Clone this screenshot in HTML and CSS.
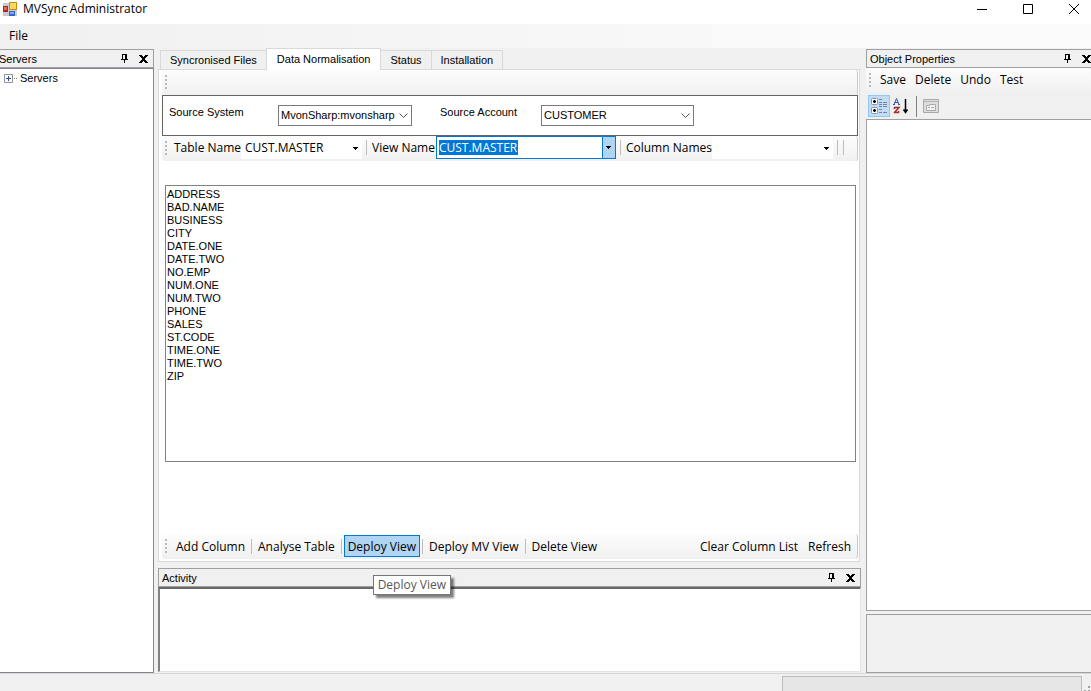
FILE: index.html
```html
<!DOCTYPE html>
<html lang="en">
<head>
  <meta charset="UTF-8" />
  <meta name="viewport" content="width=device-width, initial-scale=1.0"/>
  <title>MVSync Administrator</title>
  <link rel="stylesheet" href="styles.css">
</head>
<body>
  <svg width="0" height="0" class="defs">
    <symbol id="pin" viewBox="0 0 7 9"><path d="M1 0h5v5h1v1H4v3H3V6H0V5h1zM2 1v4h2V1z"/></symbol>
    <symbol id="cross" viewBox="0 0 9 8"><path d="M0 0h3v1h1v1h1V1h1V0h3v1H8v1H7v1H6v2h1v1h1v1h1v1H6V7H5V6H4v1H3v1H0V7h1V6h1V5h1V3H2V2H1V1H0z"/></symbol>
    <symbol id="arrow" viewBox="0 0 5 3"><path d="M0 0h5v1H4v1H3v1H2V2H1V1H0z"/></symbol>
    <symbol id="chevron" viewBox="0 0 9 6"><path d="M0.5 0.5L4.5 4.5L8.500 0.5" fill="none" stroke="#555"/></symbol>
  </svg>

  <header class="titlebar">
    <svg class="app-icon" width="14" height="14" viewBox="0 0 14 14">
      <path fill="#c8ccd2" d="M0 1h14v13H0z"/>
      <path fill="#b3261b" d="M0 4h5v6H0z"/><path fill="#e2694f" d="M1 5h3v3H1z"/>
      <path fill="#c98a12" d="M6 0h8v8H6z"/><path fill="#ffd65c" d="M7 1h6v6H7z"/>
      <path fill="#3665c4" d="M6 9h6v5H6z"/><path fill="#82aef5" d="M7 10h4v2H7z"/>
    </svg>
    <h1>MVSync Administrator</h1>
    <div class="window-buttons">
      <button aria-label="Minimize"><svg width="10" height="10"><path d="M0 5.500h10" stroke="#000"/></svg></button>
      <button aria-label="Maximize"><svg width="10" height="10"><path d="M.5.5h9v9h-9z" fill="none" stroke="#000"/></svg></button>
      <button aria-label="Close"><svg width="10" height="10"><path d="M0 0l10 10M10 0L0 10" stroke="#000"/></svg></button>
    </div>
  </header>

  <nav class="menubar"><button>File</button></nav>

  <div class="workspace">
    <aside class="servers">
      <div class="panel-head">
        <h2>Servers</h2>
        <button aria-label="Pin"><svg width="7" height="9"><use href="#pin"/></svg></button>
        <button aria-label="Close"><svg width="9" height="8"><use href="#cross"/></svg></button>
      </div>
      <ul class="tree">
        <li>
          <svg width="14" height="9" viewBox="0 0 14 9">
            <path d="M.5.5h8v8h-8z" fill="#fff" stroke="#919191"/>
            <path d="M2 4.500h5M4.500 2v5" stroke="#2b4a9b"/>
            <path d="M10 4.500h1M12 4.500h1" stroke="#808080"/>
          </svg>Servers
        </li>
      </ul>
    </aside>

    <main>
      <div class="tabs" role="tablist">
        <button role="tab">Syncronised Files</button>
        <button role="tab" class="active" aria-selected="true">Data Normalisation</button>
        <button role="tab">Status</button>
        <button role="tab">Installation</button>
      </div>

      <section class="tab-page">
        <div class="toolbar"><i class="grip"></i></div>

        <div class="source">
          <label for="system">Source System</label>
          <span class="combo system">
            <select id="system"><option>MvonSharp:mvonsharp</option></select>
            <svg width="9" height="6"><use href="#chevron"/></svg>
          </span>
          <label for="account" class="account-label">Source Account</label>
          <span class="combo account">
            <select id="account"><option>CUSTOMER</option></select>
            <svg width="9" height="6"><use href="#chevron"/></svg>
          </span>
        </div>

        <div class="toolbar filters">
          <i class="grip"></i>
          <label for="table">Table Name</label>
          <span class="flat-combo">
            <select id="table"><option>CUST.MASTER</option></select>
            <svg width="5" height="3"><use href="#arrow"/></svg>
          </span>
          <i class="sep"></i>
          <label for="view">View Name</label>
          <span class="edit-combo">
            <input id="view" type="text" value="CUST.MASTER">
            <button aria-label="Show views"><svg width="5" height="3"><use href="#arrow"/></svg></button>
          </span>
          <i class="sep"></i>
          <label for="column">Column Names</label>
          <span class="flat-combo">
            <select id="column"><option></option></select>
            <svg width="5" height="3"><use href="#arrow"/></svg>
          </span>
          <i class="sep"></i>
          <i class="sep"></i>
        </div>

        <select class="columns" multiple aria-label="Columns">
          <option>ADDRESS</option>
          <option>BAD.NAME</option>
          <option>BUSINESS</option>
          <option>CITY</option>
          <option>DATE.ONE</option>
          <option>DATE.TWO</option>
          <option>NO.EMP</option>
          <option>NUM.ONE</option>
          <option>NUM.TWO</option>
          <option>PHONE</option>
          <option>SALES</option>
          <option>ST.CODE</option>
          <option>TIME.ONE</option>
          <option>TIME.TWO</option>
          <option>ZIP</option>
        </select>

        <div class="toolbar actions">
          <i class="grip"></i>
          <button>Add Column</button>
          <i class="sep"></i>
          <button>Analyse Table</button>
          <i class="sep"></i>
          <span class="tip-anchor">
            <button class="hot" aria-describedby="tip">Deploy View</button>
            <span class="tooltip" id="tip" role="tooltip">Deploy View</span>
          </span>
          <i class="sep"></i>
          <button>Deploy MV View</button>
          <i class="sep"></i>
          <button>Delete View</button>
          <span class="spacer"></span>
          <button>Clear Column List</button>
          <button>Refresh</button>
        </div>
      </section>

      <section class="activity">
        <div class="panel-head">
          <h2>Activity</h2>
          <button aria-label="Pin"><svg width="7" height="9"><use href="#pin"/></svg></button>
          <button aria-label="Close"><svg width="9" height="8"><use href="#cross"/></svg></button>
        </div>
        <div class="log"></div>
      </section>
    </main>

    <aside class="properties">
      <div class="panel-head">
        <h2>Object Properties</h2>
        <button aria-label="Pin"><svg width="7" height="9"><use href="#pin"/></svg></button>
        <button aria-label="Close"><svg width="9" height="8"><use href="#cross"/></svg></button>
      </div>
      <div class="toolbar">
        <i class="grip"></i>
        <button>Save</button>
        <button>Delete</button>
        <button>Undo</button>
        <button>Test</button>
      </div>
      <div class="grid-tools">
        <button class="on" aria-label="Categorized">
          <svg width="16" height="16" viewBox="0 0 16 16">
            <rect x=".5" y=".5" width="6" height="6" rx="1" fill="#fff" stroke="#7d95b5"/>
            <rect x=".5" y="9.500" width="6" height="6" rx="1" fill="#fff" stroke="#7d95b5"/>
            <path d="M2 3.500h3M3.500 2v3M2 12.500h3M3.500 11v3" stroke="#000" stroke-width="1.500"/>
            <path d="M8 1.500h3M8 4.500h3M12 4.500h4M8 6.500h3M12 6.500h4M8 8.500h3M12 8.500h4M8 11.500h3M8 14.500h3M12 14.500h4" stroke="#6f87a6"/>
          </svg>
        </button>
        <button aria-label="Alphabetical">
          <svg width="16" height="16" viewBox="0 0 16 16">
            <path d="M1 6.500L3.500.5L6 6.500M2 4.500h3M0 6.500h2M5 6.500h2" fill="none" stroke="#2a57a8"/>
            <path d="M1 9.500h5L1 15M1 14.500h5M1.500 9v2M5.500 13v2" fill="none" stroke="#a02c2c" stroke-width="1.500"/>
            <path d="M12.500 1v13M10.500 11.500l2 3l2-3" fill="none" stroke="#000" stroke-width="1.500"/>
          </svg>
        </button>
        <i class="line"></i>
        <button aria-label="Property pages" disabled>
          <svg width="16" height="16" viewBox="0 0 16 16">
            <path d="M.5 1.500h15v13H.5z" fill="#dedede" stroke="#a8a8a8"/>
            <path d="M1 3.500h14" stroke="#b4b4b4"/>
            <path d="M3.500 7.500h3v-1h6v6h-9z" fill="#f4f4f4" stroke="#a8a8a8"/>
            <path d="M5 9.500h2M8 9.500h3" stroke="#a8a8a8"/>
          </svg>
        </button>
      </div>
      <div class="grid-view"></div>
      <div class="description"></div>
    </aside>
  </div>

  <footer class="statusbar">
    <div class="progress"></div>
    <svg width="7" height="10" viewBox="0 0 7 10"><path fill="#a0a0a0" d="M4 0h2v2H4zM0 4h2v2H0zM4 4h2v2H4zM0 8h2v2H0zM4 8h2v2H4z"/></svg>
  </footer>
</body>
</html>
```

FILE: styles.css
```css
* {
  box-sizing: border-box;
}

html, body {
  height: 100%;
  margin: 0;
}

body {
  display: flex;
  flex-direction: column;
  overflow: hidden;
  background: #f0f0f0;
  color: #000;
  font-family: "Liberation Sans", Arial, sans-serif;
  font-size: 11px;
}

button, select, input {
  font: inherit;
  color: inherit;
  margin: 0;
  padding: 0;
  border: 0;
  border-radius: 0;
  background: none;
  outline: none;
}

svg {
  display: block;
  flex: none;
}

.defs {
  position: absolute;
}

h1, h2 {
  margin: 0;
  font-size: inherit;
  font-weight: normal;
}

/* title bar and menu */
.titlebar {
  display: flex;
  align-items: center;
  flex: none;
  height: 24px;
  padding: 0 0 7px 3px;
  background: #fff;
  font-family: "Open Sans", "Noto Sans", sans-serif;
  font-size: 12px;
}

.titlebar h1 {
  flex: 1;
  margin-left: 6px;
}

.window-buttons button {
  width: 46px;
  height: 16px;
}

.window-buttons {
  display: flex;
  margin-right: -6px;
}

.window-buttons svg {
  margin: auto;
}

.menubar {
  flex: none;
  height: 24px;
  padding-left: 9px;
  background: linear-gradient(to right, #f0f0f0, #fbfbfb 80%);
  font-family: "Open Sans", "Noto Sans", sans-serif;
  font-size: 12px;
  line-height: 24px;
}

.workspace {
  flex: 1;
  min-height: 0;
  display: grid;
  grid-template-columns: 154px minmax(0, 1fr) 225px;
}

.panel-head {
  display: flex;
  align-items: center;
  flex: none;
  height: 19px;
  padding: 0 5px 0 3px;
  border: 1px solid #a0a0a0;
}

.panel-head h2 {
  flex: 1;
}

.panel-head button + button {
  margin-left: 11px;
}

/* servers */
.servers {
  display: flex;
  flex-direction: column;
  padding-top: 1px;
}

.servers .panel-head {
  border-left: 0;
  padding-left: 0;
}

.servers h2 {
  margin-left: -1px;
}

.tree {
  flex: 1;
  margin: 0;
  padding: 2px 4px;
  list-style: none;
  background: #fff;
  border: 1px solid #828790;
  border-left: 0;
}

.tree li {
  display: flex;
  align-items: center;
  gap: 2px;
  height: 14px;
}

/* centre */
main {
  display: flex;
  flex-direction: column;
  min-width: 0;
  padding: 0 5px 0 4px;
}

.tabs {
  display: flex;
  align-items: flex-end;
  flex: none;
  height: 21px;
  padding-left: 2px;
}

.tabs button {
  height: 19px;
  padding: 0 9px;
  border: 1px solid #d9d9d9;
  border-bottom: 0;
  margin-right: -1px;
}

.tabs .active {
  position: relative;
  height: 22px;
  margin-bottom: -1px;
  padding: 0 10px 2px;
  background: #fff;
}

.tab-page {
  flex: 1;
  min-height: 0;
  display: flex;
  flex-direction: column;
  margin-right: 1px;
  padding: 0 1px 2px 3px;
  background: #fff;
  border: 1px solid #d9d9d9;
}

.toolbar {
  display: flex;
  align-items: center;
  flex: none;
  height: 25px;
  padding: 0 0 2px 3px;
  background: linear-gradient(#fdfdfd, #f0f0f0);
  border-right: 1px solid #c8c8c8;
  border-radius: 3px;
  font-family: "Open Sans", "Noto Sans", sans-serif;
  font-size: 12px;
  white-space: nowrap;
}

.grip {
  flex: none;
  width: 2px;
  height: 14px;
  background: repeating-linear-gradient(#b8b8b8 0 2px, transparent 2px 4px);
}

.sep {
  flex: none;
  width: 1px;
  height: 15px;
  background: #bdbdbd;
}

.source {
  display: flex;
  flex: none;
  height: 41px;
  padding: 9px 6px;
  border: 1px solid #646464;
}

.source label {
  width: 109px;
  line-height: 15px;
}

.source .account-label {
  width: 101px;
  margin-left: 28px;
}

.combo {
  position: relative;
  height: 21px;
}

.system {
  width: 134px;
}

.account {
  width: 153px;
}

.combo select {
  width: 100%;
  height: 100%;
  padding: 0 0 2px 2px;
  background: #fff;
  border: 1px solid #7a7a7a;
  appearance: none;
}

.combo svg {
  position: absolute;
  right: 4px;
  top: 8px;
  pointer-events: none;
}

.filters label {
  margin-left: 7px;
}

.flat-combo {
  position: relative;
  width: 121px;
  height: 23px;
  margin: 0 4px 0 0;
}

.flat-combo select {
  width: 100%;
  height: 100%;
  padding-left: 4px;
  background: #fff;
  appearance: none;
}

.flat-combo svg {
  position: absolute;
  right: 4px;
  top: 11px;
  pointer-events: none;
}

.filters .sep + label {
  margin-left: 5px;
}

.filters .sep + .sep {
  margin-left: 5px;
}

.edit-combo {
  display: flex;
  align-items: center;
  width: 180px;
  height: 23px;
  margin: 0 4px 0 1px;
  background: #fff;
  border: 1px solid #0078d7;
}

.edit-combo input {
  width: 79px;
  height: 15px;
  margin-left: 2px;
  background: #0078d7;
  color: #fff;
}

.edit-combo button {
  width: 13px;
  height: 100%;
  margin-left: auto;
  padding-left: 3px;
  background: #b0d5f2;
  border-left: 1px solid #0078d7;
}

.columns {
  flex: 1;
  min-height: 0;
  margin: 24px 2px 72px 3px;
  padding: 2px 0 0;
  background: #fff;
  border: 1px solid #828282;
}

.columns option {
  min-height: 0;
  padding: 0 1px 1px;
}

.actions {
  padding-bottom: 1px;
}

.actions button {
  height: 22px;
  padding: 0 3px;
  border: 1px solid transparent;
}

.actions .grip + button {
  margin-left: 5px;
}

.actions .sep {
  margin: 0 2px;
}

.actions .hot {
  background: #b0d5f2;
  border-color: #0078d7;
}

.actions button:last-child {
  margin: 0 2px;
}

.spacer {
  flex: 1;
}

.tip-anchor {
  position: relative;
}

.tooltip {
  position: absolute;
  left: 29px;
  top: 40px;
  z-index: 2;
  padding: 0 4px;
  background: #fff;
  border: 1px solid #767676;
  box-shadow: 3px 3px 2px rgba(0, 0, 0, 0.5);
  color: #575757;
  line-height: 18px;
}

.activity {
  flex: none;
  margin-top: 6px;
}

.log {
  height: 85px;
  margin-bottom: 1px;
  background: #fff;
  border: 1px solid #e3e3e3;
  border-top: 2px solid #696969;
  border-left: 2px solid #828282;
}

/* object properties */
.properties {
  display: flex;
  flex-direction: column;
  min-width: 0;
  padding-top: 1px;
}

.properties .panel-head {
  padding-right: 0;
  border-right: 0;
}

.properties .toolbar {
  border-right: 0;
}

.properties .toolbar button {
  margin-left: 9px;
}

.grid-tools {
  display: flex;
  align-items: center;
  flex: none;
  height: 26px;
  padding-left: 2px;
}

.grid-tools button {
  padding: 2px;
  border: 1px solid transparent;
}

.grid-tools .on {
  background: #c2dcf3;
  border-color: #90c8f6;
}

.grid-tools .line {
  width: 1px;
  height: 21px;
  margin: 0 3px 0 4px;
  background: #808080;
}

.grid-view {
  flex: 1;
  background: #fff;
  border: 1px solid #a0a0a0;
  border-right: 0;
}

.description {
  flex: none;
  height: 59px;
  margin-top: 3px;
  border: 1px solid #a0a0a0;
  border-right: 0;
}

.statusbar {
  display: flex;
  justify-content: flex-end;
  flex: none;
  height: 18px;
  padding-top: 2px;
  border-top: 1px solid #d7d7d7;
}

.progress {
  width: 300px;
  height: 18px;
  background: #e6e6e6;
  border: 1px solid #bcbcbc;
}

.statusbar svg {
  margin: 10px 0 0 2px;
}
```
